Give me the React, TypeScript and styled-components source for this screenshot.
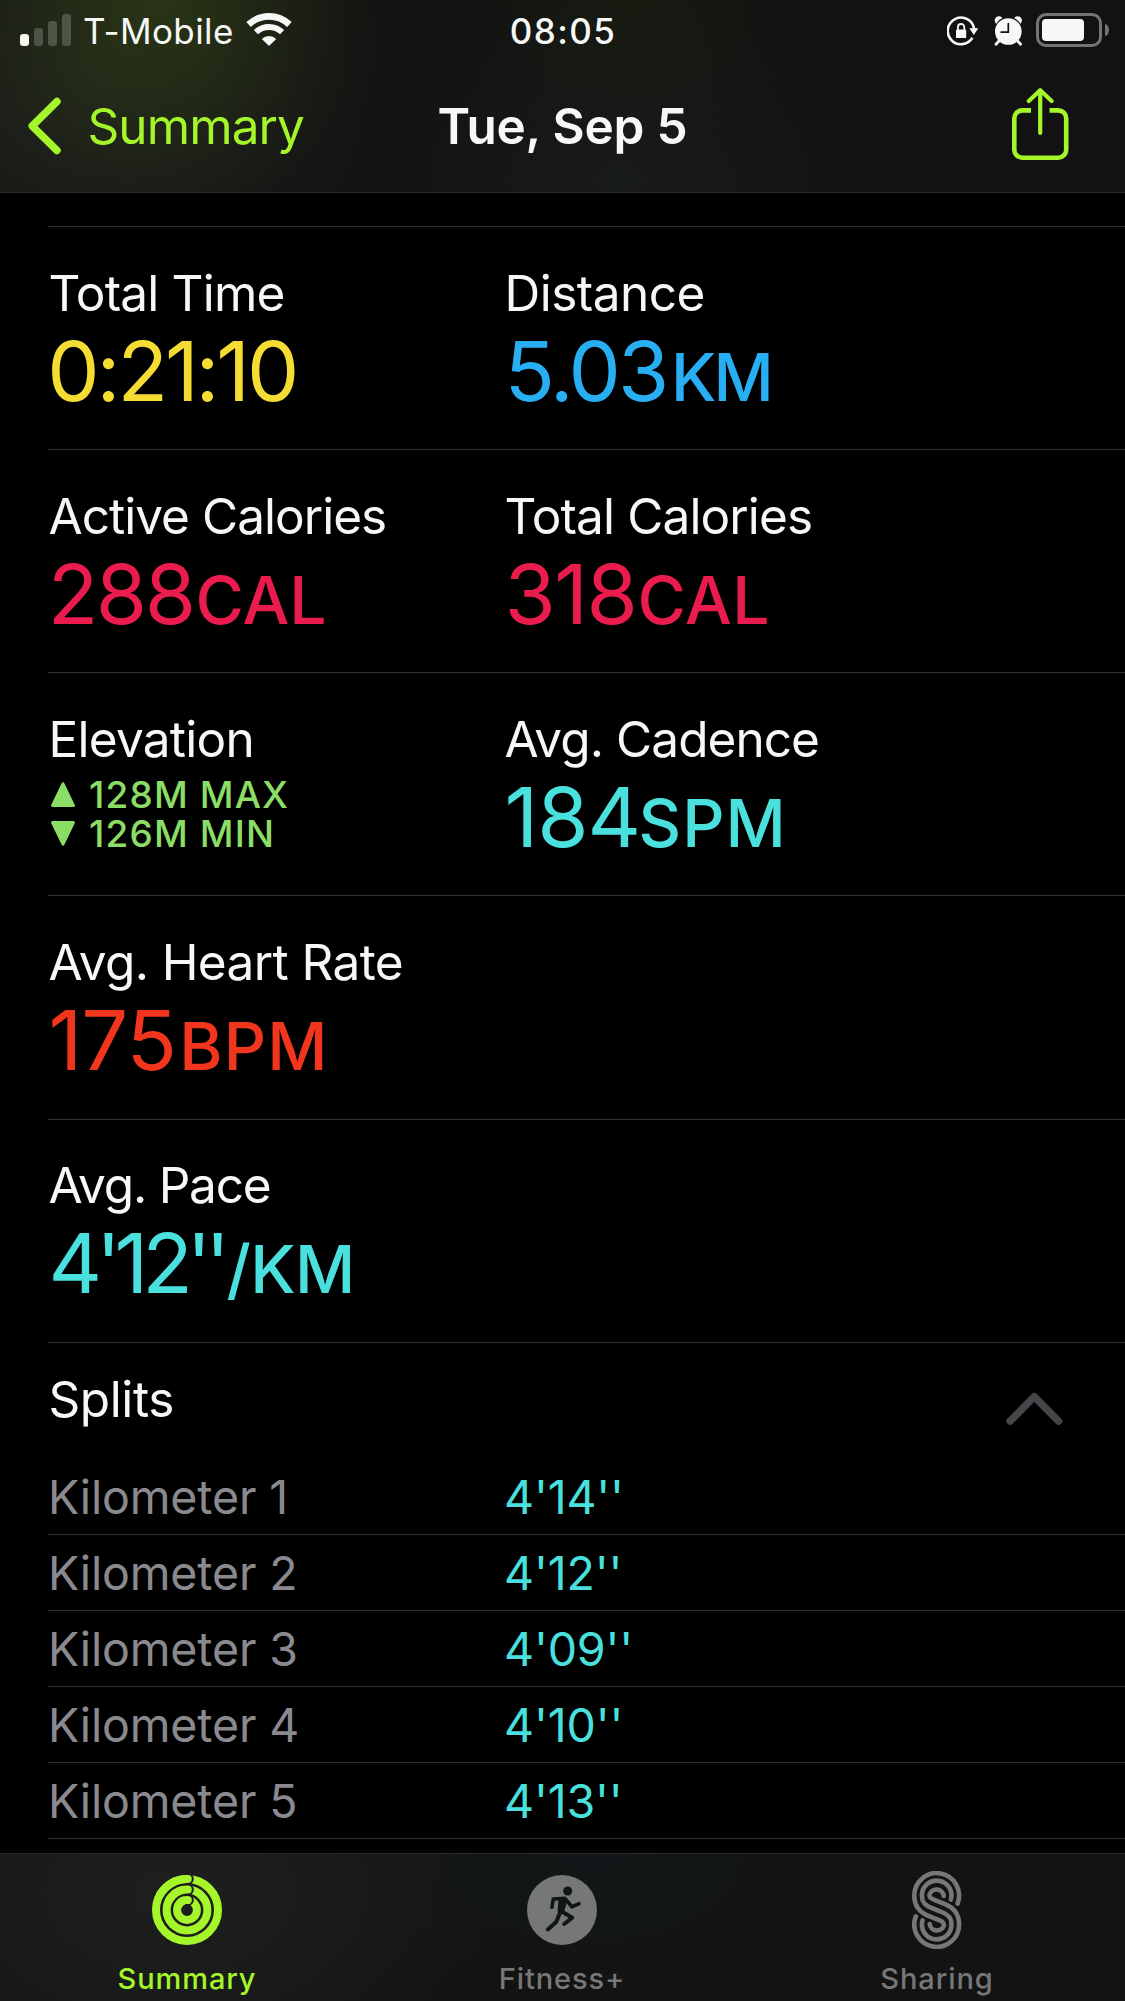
import React from "react";
import styled, { createGlobalStyle } from "styled-components";

const GREEN = "#a4f52a";
const CYAN = "#4ae0de";
const PINK = "#ea1c4d";
const INK = "#f6f8f6";
const LINE = "#303030";
const MUTED = "#767777";

const GlobalStyle = createGlobalStyle`
  * { box-sizing: border-box; }
  body { margin: 0; background: #000; }
  svg { display: block; flex: none; }
`;

const Screen = styled.div`
  display: flex;
  flex-direction: column;
  width: 1125px;
  height: 2001px;
  background: #000;
  color: ${INK};
  font-family: Inter, "Liberation Sans", sans-serif;
  white-space: nowrap;
  overflow: hidden;
`;

const Header = styled.header`
  height: 193px;
  border-bottom: 1px solid #2a2b2a;
  background:
    radial-gradient(ellipse 230px 220px at 160px 0px, rgba(66, 95, 14, 0.36), rgba(66, 95, 14, 0.22) 35%, rgba(66, 95, 14, 0.06) 75%, transparent),
    radial-gradient(ellipse 330px 280px at 90px 90px, rgba(60, 68, 48, 0.3), rgba(60, 68, 48, 0.2) 40%, rgba(60, 68, 48, 0.05) 80%, transparent),
    radial-gradient(ellipse 190px 150px at 630px 0px, rgba(50, 70, 10, 0.16), transparent),
    radial-gradient(ellipse 250px 180px at 620px 180px, rgba(50, 62, 62, 0.2), transparent),
    #121212;
`;

const StatusBar = styled.div`
  display: grid;
  grid-template-columns: 1fr auto 1fr;
  align-items: center;
  height: 62px;
  padding: 0 16px 0 20px;
  font-size: 35px;
  line-height: 62px;
`;

const StatusLeft = styled.div`
  display: flex;
  align-items: center;
  gap: 12px;
`;

const StatusRight = styled.div`
  display: flex;
  align-items: center;
  justify-content: flex-end;
`;

const Carrier = styled.span`
  letter-spacing: 0.4px;
`;

const Clock = styled.span`
  font-weight: 500;
  letter-spacing: 1.4px;
  padding-right: 3px;
`;

const Signal = styled.div`
  display: flex;
  align-items: flex-end;
  gap: 5px;
  height: 32px;
  margin-bottom: 2px;
`;

const SignalBar = styled.span<{ $height: number; $on?: boolean }>`
  width: 9px;
  height: ${(p) => p.$height}px;
  border-radius: 3px;
  background: ${(p) => (p.$on ? INK : "rgba(255, 255, 255, 0.2)")};
`;

const Battery = styled.div`
  width: 66px;
  height: 34px;
  margin: 0 3px 2px 13px;
  padding: 3px;
  border: 3px solid #747474;
  border-radius: 10px;
`;

const BatteryLevel = styled.div`
  width: 42px;
  height: 22px;
  border-radius: 4px;
  background: ${INK};
`;

const BatteryTip = styled.div`
  width: 4px;
  height: 12px;
  margin-bottom: 2px;
  border-radius: 0 4px 4px 0 / 0 6px 6px 0;
  background: #747474;
`;

const NavBar = styled.nav`
  display: grid;
  grid-template-columns: 1fr auto 1fr;
  align-items: center;
  height: 130px;
  padding: 0 28px 2px;
  font-size: 49.5px;
  line-height: 60px;
`;

const BackButton = styled.div`
  display: flex;
  align-items: center;
  gap: 26.5px;
  color: ${GREEN};
  letter-spacing: -0.9px;
`;

const Title = styled.h1`
  margin: 0;
  font-size: inherit;
  font-weight: 600;
  letter-spacing: -0.19px;
`;

const ShareButton = styled.div`
  justify-self: end;
  margin: 0 28px 4px 0;
  color: ${GREEN};
`;

const Content = styled.main`
  flex: 1;
  margin: 33px 0 0 48px;
  border-top: 1px solid ${LINE};
`;

const MetricRow = styled.section<{ $height?: number; $top?: number }>`
  display: grid;
  grid-template-columns: 456px 1fr;
  height: ${(p) => p.$height ?? 223}px;
  padding: ${(p) => p.$top ?? 36}px 0 0 0.5px;
  border-bottom: 1px solid ${LINE};
`;

const Label = styled.div<{ $tracking: number }>`
  font-size: 49.5px;
  line-height: 60px;
  letter-spacing: ${(p) => p.$tracking}px;
`;

const Value = styled.div<{ $color: string; $shift: number }>`
  display: flex;
  align-items: baseline;
  margin-top: 3px;
  margin-left: ${(p) => p.$shift}px;
  color: ${(p) => p.$color};
`;

const Amount = styled.span<{ $tracking: number }>`
  font-size: 83px;
  line-height: 90px;
  letter-spacing: ${(p) => p.$tracking}px;
`;

const Unit = styled.span<{ $tracking: number; $gap: number }>`
  margin-left: ${(p) => p.$gap}px;
  font-size: 66px;
  font-weight: 500;
  line-height: 66px;
  letter-spacing: ${(p) => p.$tracking}px;
`;

const ElevationList = styled.div`
  margin: 6px 0 0 2.5px;
  color: #8cdd66;
  font-size: 37px;
  font-weight: 500;
  line-height: 39px;
  letter-spacing: 1.15px;
`;

const ElevationLine = styled.div`
  display: flex;
  align-items: center;
  gap: 14px;
`;

const SplitsHeader = styled.div`
  display: flex;
  justify-content: space-between;
  height: 116px;
  padding: 26px 62.5px 0 0.5px;
`;

const ChevronSlot = styled.div`
  padding-top: 22.5px;
`;

const SplitRow = styled.div`
  display: grid;
  grid-template-columns: 456px 1fr;
  height: 76px;
  border-bottom: 1px solid ${LINE};
  font-size: 46.5px;
  line-height: 76px;
  letter-spacing: -0.15px;
`;

const SplitName = styled.span`
  color: #8b8990;
`;

const SplitPace = styled.span`
  color: ${CYAN};
`;

const TabBar = styled.footer`
  display: grid;
  grid-template-columns: repeat(3, 1fr);
  height: 148px;
  border-top: 1px solid #2a2b2b;
  background:
    radial-gradient(ellipse 330px 210px at 170px 40px, rgba(60, 64, 64, 0.26), rgba(60, 64, 64, 0.16) 50%, transparent),
    radial-gradient(ellipse 240px 140px at 590px 0px, rgba(10, 50, 60, 0.14), transparent),
    #131313;
`;

const Tab = styled.div<{ $color: string }>`
  display: flex;
  flex-direction: column;
  align-items: center;
  padding: 17px 1px 0 0;
  color: ${(p) => p.$color};
`;

const TabIcon = styled.div`
  display: flex;
  align-items: center;
  height: 78px;
`;

const TabLabel = styled.span`
  margin-top: 12px;
  font-size: 29px;
  font-weight: 500;
  line-height: 36px;
  letter-spacing: 0.9px;
`;

const WifiIcon = () => (
  <svg width="46" height="33" viewBox="0 0 46 33" fill="none" stroke={INK} style={{ marginBottom: 3 }}>
    <path d="M2.6 11.5A29.7 29.7 0 0 1 43.4 11.5" strokeWidth="6.6" />
    <path d="M9.9 19.2A19 19 0 0 1 36.1 19.2" strokeWidth="6" />
    <path d="M23 33L15.8 25.9A10.4 10.4 0 0 1 30.2 25.9Z" fill={INK} stroke="none" />
  </svg>
);

const RotationLockIcon = () => (
  <svg width="31" height="30" viewBox="0 0 31 30" fill="none" stroke={INK}>
    <path d="M25.4 21.8A13.3 13.3 0 1 1 27.2 13" strokeWidth="2.6" />
    <path d="M22.3 12.3H31.3L26.8 19Z" fill={INK} stroke="none" />
    <rect x="9" y="13.5" width="10.2" height="8.6" rx="1.2" fill={INK} stroke="none" />
    <path d="M10.9 14V11.2A3.2 3.2 0 0 1 17.3 11.2V14" strokeWidth="1.8" />
  </svg>
);

const AlarmIcon = () => (
  <svg width="29" height="30" viewBox="0 0 29 30" style={{ marginLeft: 16 }}>
    <g fill={INK}>
      <circle cx="4.9" cy="4.5" r="4.2" />
      <circle cx="23.7" cy="4.5" r="4.2" />
    </g>
    <circle cx="14.3" cy="15.5" r="14.4" fill="#121212" />
    <path d="M5 25L2 28.3M23.6 25L26.6 28.3" stroke={INK} strokeWidth="2.8" strokeLinecap="round" />
    <circle cx="14.3" cy="15.5" r="13.3" fill={INK} />
    <path d="M14.3 7.5V16.2H7.2" fill="none" stroke="#121212" strokeWidth="1.7" strokeLinecap="round" />
  </svg>
);

const BackChevron = () => (
  <svg width="33" height="58" viewBox="0 0 33 58" fill="none" stroke="currentColor" strokeWidth="7.4" strokeLinecap="round" strokeLinejoin="round">
    <path d="M29 4.5L4.2 29L29 53.5" />
  </svg>
);

const ShareIcon = () => (
  <svg width="57" height="72" viewBox="0 0 57 72" fill="none" stroke="currentColor" strokeWidth="4.6">
    <path d="M19 22.4H10.3A8 8 0 0 0 2.3 30.4V61.7A8 8 0 0 0 10.3 69.7H46.2A8 8 0 0 0 54.2 61.7V30.4A8 8 0 0 0 46.2 22.4H37.5" />
    <path d="M28.2 3V45" strokeWidth="4.2" strokeLinecap="round" />
    <path d="M16.8 13L28.2 2.3L39.6 13" strokeWidth="4.2" strokeLinecap="round" strokeLinejoin="round" />
  </svg>
);

const CollapseChevron = () => (
  <svg width="57" height="34" viewBox="0 0 57 34" fill="none" stroke="#464549" strokeWidth="7.4" strokeLinecap="round" strokeLinejoin="round">
    <path d="M4.1 29.2L28.3 4.6L52.5 29.2" />
  </svg>
);

const Triangle = ({ down }: { down?: boolean }) => (
  <svg width="24" height="25" viewBox="0 0 24 25" fill="currentColor" stroke="currentColor" strokeWidth="3" strokeLinejoin="round">
    <path d={down ? "M1.6 1.6H22.4L12 23.2Z" : "M1.6 23.4H22.4L12 1.8Z"} />
  </svg>
);

const Ring = ({ r }: { r: number }) => {
  const a = (60 * Math.PI) / 180;
  return (
    <>
      <circle cx="35" cy="35" r={r} fill="none" stroke="currentColor" strokeWidth="8" />
      <circle cx="36.2" cy={35 - r} r="5.6" fill="#1a1c1c" />
      <path
        d={`M${35 - r * Math.sin(a)} ${35 - r * Math.cos(a)}A${r} ${r} 0 0 1 35.8 ${35 - r}`}
        fill="none"
        stroke="currentColor"
        strokeWidth="8"
        strokeLinecap="round"
      />
    </>
  );
};

const RingsIcon = () => (
  <svg width="70" height="70" viewBox="0 0 70 70">
    <Ring r={31} />
    <Ring r={20.4} />
    <Ring r={9.9} />
  </svg>
);

const RunnerIcon = () => (
  <svg width="70" height="70" viewBox="0 0 70 70">
    <circle cx="35" cy="35" r="35" fill="currentColor" />
    <circle cx="40.7" cy="16" r="4.5" fill="#111517" />
    <g fill="none" stroke="#111517" strokeWidth="3.6" strokeLinecap="round" strokeLinejoin="round">
      <path d="M24.9 32.3L26.3 24L38 23.4L44.9 31.8L52 28.7" />
      <path d="M33.5 36.5L29.2 47L20.8 54.5" strokeWidth="4" />
      <path d="M34 36L45.2 42.7L37.2 49" strokeWidth="4" />
      <path d="M33.5 25L38.5 25.5L35 36.5L32.6 36Z" fill="#111517" strokeWidth="4" />
    </g>
  </svg>
);

const OUTER_STRAND =
  "M45.6 32.4A22.4 22.4 0 1 0 2.3 24.6C2.3 36 8 41.5 17 45L26.5 48.8C30 50.2 32 51 32 54A7.3 7.3 0 0 1 17.7 52.8";

const SharingIcon = () => (
  <svg width="49.4" height="78" viewBox="0 0 49.4 77.7" fill="none" stroke="currentColor" strokeWidth="4.6" strokeLinecap="round">
    <path d={OUTER_STRAND} />
    <path d="M38.9 28.4A14.8 14.8 0 1 0 9.9 24.6C9.9 32 14 34.8 20 37L29.4 40.7C35.4 42.9 39.5 45.7 39.5 53.1A14.8 14.8 0 1 1 10.5 49.3" />
    <path d={OUTER_STRAND} transform="rotate(180 24.7 38.85)" />
  </svg>
);

type MetricProps = {
  label: string;
  labelTracking: number;
  amount: string;
  tracking: number;
  shift?: number;
  unit?: string;
  unitTracking?: number;
  gap?: number;
  color: string;
};

const Metric = ({ label, labelTracking, amount, tracking, shift = 0, unit, unitTracking = 0, gap = 0, color }: MetricProps) => (
  <div>
    <Label $tracking={labelTracking}>{label}</Label>
    <Value $color={color} $shift={shift}>
      <Amount $tracking={tracking}>{amount}</Amount>
      {unit && (
        <Unit $tracking={unitTracking} $gap={gap}>
          {unit}
        </Unit>
      )}
    </Value>
  </div>
);

const splits = ["4'14''", "4'12''", "4'09''", "4'10''", "4'13''"];

export default function App() {
  return (
    <>
      <GlobalStyle />
      <Screen>
        <Header>
          <StatusBar>
            <StatusLeft>
              <Signal>
                <SignalBar $height={12} $on />
                <SignalBar $height={18} />
                <SignalBar $height={25} />
                <SignalBar $height={32} />
              </Signal>
              <Carrier>T-Mobile</Carrier>
              <WifiIcon />
            </StatusLeft>
            <Clock>08:05</Clock>
            <StatusRight>
              <RotationLockIcon />
              <AlarmIcon />
              <Battery>
                <BatteryLevel />
              </Battery>
              <BatteryTip />
            </StatusRight>
          </StatusBar>
          <NavBar>
            <BackButton>
              <BackChevron />
              Summary
            </BackButton>
            <Title>Tue, Sep 5</Title>
            <ShareButton>
              <ShareIcon />
            </ShareButton>
          </NavBar>
        </Header>

        <Content>
          <MetricRow>
            <Metric label="Total Time" labelTracking={-0.8} amount="0:21:10" tracking={-3.1} shift={-1.2} color="#f5dc32" />
            <Metric label="Distance" labelTracking={-0.51} amount="5.03" tracking={-2.96} unit="KM" unitTracking={-2.9} gap={4.6} color="#28aef3" />
          </MetricRow>
          <MetricRow>
            <Metric label="Active Calories" labelTracking={-0.97} amount="288" tracking={-2.5} shift={-0.8} unit="CAL" unitTracking={0} gap={2} color={PINK} />
            <Metric label="Total Calories" labelTracking={-0.87} amount="318" tracking={-1.5} unit="CAL" unitTracking={0.6} gap={1} color={PINK} />
          </MetricRow>
          <MetricRow>
            <div>
              <Label $tracking={-0.73}>Elevation</Label>
              <ElevationList>
                <ElevationLine>
                  <Triangle />
                  128M MAX
                </ElevationLine>
                <ElevationLine>
                  <Triangle down />
                  126M MIN
                </ElevationLine>
              </ElevationList>
            </div>
            <Metric label="Avg. Cadence" labelTracking={-0.93} amount="184" tracking={-1.05} unit="SPM" unitTracking={1} gap={-1.5} color={CYAN} />
          </MetricRow>
          <MetricRow $height={224}>
            <Metric label="Avg. Heart Rate" labelTracking={-0.6} amount="175" tracking={-1} unit="BPM" unitTracking={1.15} gap={3.4} color="#f2361d" />
          </MetricRow>
          <MetricRow $top={35}>
            <Metric label="Avg. Pace" labelTracking={-1.2} amount="4'12''" tracking={-6.2} unit="/KM" unitTracking={-0.6} gap={2.6} color={CYAN} />
          </MetricRow>

          <SplitsHeader>
            <Label $tracking={-0.4}>Splits</Label>
            <ChevronSlot>
              <CollapseChevron />
            </ChevronSlot>
          </SplitsHeader>
          {splits.map((pace, i) => (
            <SplitRow key={i}>
              <SplitName>Kilometer {i + 1}</SplitName>
              <SplitPace>{pace}</SplitPace>
            </SplitRow>
          ))}
        </Content>

        <TabBar>
          <Tab $color={GREEN}>
            <TabIcon>
              <RingsIcon />
            </TabIcon>
            <TabLabel>Summary</TabLabel>
          </Tab>
          <Tab $color={MUTED}>
            <TabIcon>
              <RunnerIcon />
            </TabIcon>
            <TabLabel>Fitness+</TabLabel>
          </Tab>
          <Tab $color={MUTED}>
            <TabIcon>
              <SharingIcon />
            </TabIcon>
            <TabLabel>Sharing</TabLabel>
          </Tab>
        </TabBar>
      </Screen>
    </>
  );
}
